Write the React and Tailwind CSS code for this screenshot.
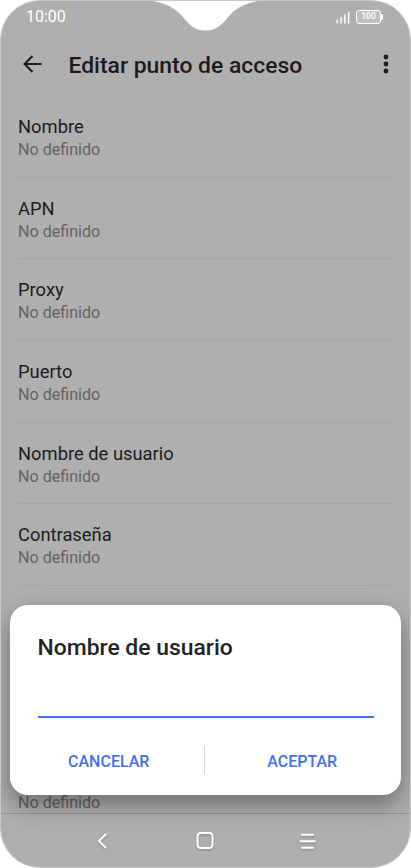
import { useState } from 'react'

const FIELDS = ['Nombre', 'APN', 'Proxy', 'Puerto', 'Nombre de usuario', 'Contraseña']

function Notch() {
  return (
    <svg className="absolute -left-px -top-px" width="411" height="32" viewBox="0 0 411 32">
      <path
        d="M143 0 C162 1 174 6.5 182 16 C190 26 195 30.5 205.5 30.5 C216 30.5 221 26 229 16 C237 6.5 249 1 268 0 Z"
        fill="#fff"
      />
    </svg>
  )
}

function StatusBar() {
  return (
    <div className="flex h-8 shrink-0 items-center justify-between pl-[25px] pr-[27px] text-white">
      <span className="text-[16px] leading-8">10:00</span>
      <div className="flex items-center gap-1.5">
        <svg width="14" height="14" viewBox="0 0 14 14" fill="currentColor">
          <rect x="0.5" y="9.5" width="1.4" height="4" />
          <rect x="4.4" y="7" width="1.4" height="6.5" />
          <rect x="8.2" y="4.5" width="1.4" height="9" />
          <rect x="11.9" y="2" width="1.4" height="11.5" />
        </svg>
        <div className="-mt-px flex items-center">
          <span className="flex h-[14px] w-[25px] items-center justify-center rounded-[3px] border border-white bg-white/20 text-[8.5px] font-medium leading-none">
            100
          </span>
          <span className="h-1.5 w-0.5 rounded-r-sm bg-white" />
        </div>
      </div>
    </div>
  )
}

function Header() {
  return (
    <header className="flex h-[63px] shrink-0 items-center pl-[20px] pr-[20px] text-[#1c1c1c]">
      <svg className="-mt-0.5" width="22" height="22" viewBox="0 0 22 22" fill="none" stroke="currentColor" strokeWidth="2">
        <path d="M11.5 3 L3.5 11 L11.5 19 M3.5 11 H20.5" />
      </svg>
      <h1 className="ml-[25.5px] mt-0.5 flex-1 whitespace-nowrap text-[22.9px] font-medium leading-7">
        Editar punto de acceso
      </h1>
      <svg className="-mt-px" width="8" height="22" viewBox="0 0 8 22" fill="currentColor">
        <circle cx="4" cy="4" r="2.4" />
        <circle cx="4" cy="11" r="2.4" />
        <circle cx="4" cy="18" r="2.4" />
      </svg>
    </header>
  )
}

function FieldRow({ name }) {
  return (
    <div className="h-[81.67px] border-b border-[#a6a6a6] pt-[18.9px]">
      <p className="h-6 text-[18.35px] leading-6 text-[#1c1c1c]">{name}</p>
      <p className="text-[16.1px] leading-[22px] text-[#636363]">No definido</p>
    </div>
  )
}

function NavBar() {
  return (
    <nav className="flex h-[54px] shrink-0 items-center justify-center border-t border-[#979797] text-white">
      <svg
        className="mr-px drop-shadow-[0_1px_1px_rgba(0,0,0,0.25)]"
        width="240"
        height="28"
        viewBox="0 0 240 28"
        fill="none"
        stroke="currentColor"
        strokeWidth="2"
        strokeLinecap="round"
        strokeLinejoin="round"
      >
        <path d="M20.5 7.5 L14 14 L20.5 20.5" />
        <rect x="112.5" y="6" width="15" height="15" rx="3.2" />
        <path d="M217 7.8 H228 M215.5 14.3 H230 M217 20.8 H228" />
      </svg>
    </nav>
  )
}

function UserDialog() {
  const [value, setValue] = useState('')

  return (
    <div className="absolute left-[9px] right-[9px] top-[604px] flex h-[190px] flex-col rounded-[18px] bg-white px-[27.5px] shadow-[0_10px_24px_rgba(0,0,0,0.38)]">
      <h2 className="mt-7 whitespace-nowrap text-[22.9px] font-medium leading-[30px] text-[#232323]">
        Nombre de usuario
      </h2>
      <input
        value={value}
        onChange={(e) => setValue(e.target.value)}
        className="mt-[23px] h-8 w-full border-b-2 border-[#4171f5] outline-none"
      />
      <div className="mt-[28px] flex h-7 items-center text-[16px] font-medium text-[#4171f5]">
        <button className="flex-1 pr-[25px] pt-1">CANCELAR</button>
        <span className="-ml-px mr-px h-7 w-px bg-[#d9d9d9]" />
        <button className="flex-1 pl-[25px] pt-1">ACEPTAR</button>
      </div>
    </div>
  )
}

export default function App() {
  return (
    <div className="h-[868px] w-[411px] overflow-hidden bg-white font-[Roboto,sans-serif]">
      <div className="relative flex h-full flex-col overflow-hidden rounded-[40px] border border-[#c8c8c8] bg-[#afafaf]">
        <StatusBar />
        <Header />
        <main className="min-h-0 flex-1 overflow-hidden px-[17px]">
          {FIELDS.map((name) => (
            <FieldRow key={name} name={name} />
          ))}
          {/* rows behind the dialog */}
          <div className="h-[163.33px]" />
          <FieldRow />
        </main>
        <NavBar />
        <UserDialog />
        <Notch />
      </div>
    </div>
  )
}
